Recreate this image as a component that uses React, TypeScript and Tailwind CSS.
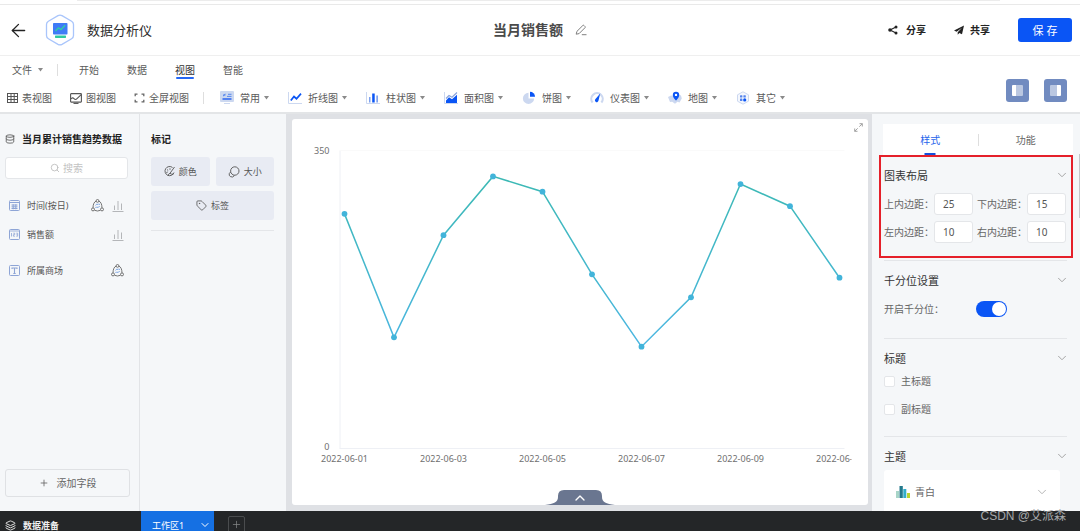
import { type ReactNode } from "react";
import { ArrowLeft, ChevronDown, ChevronUp, Database, Layers, Plus, Search, Tag } from "lucide-react";

const PRIMARY = "#0a55f5";
const SOFT = "#ccd8f0";

const points = [275, 130, 250, 319, 301, 204, 119, 177, 310, 284, 200];
const dates = ["2022-06-01", "2022-06-03", "2022-06-05", "2022-06-07", "2022-06-09", "2022-06-11"];

const menus = ["开始", "数据", "视图", "智能"];

function Caret() {
  return (
    <svg width="5" height="4" viewBox="0 0 5 4" className="shrink-0">
      <path d="M0 0h5L2.5 3.6z" fill="#8a8a8a" />
    </svg>
  );
}

function LogoIcon() {
  return (
    <svg width="30" height="32" viewBox="0 0 30 32">
      <path
        d="M13 1.6q2-1.1 4 0l9.6 5.6q1.9 1.1 1.9 3.3v11q0 2.2-1.9 3.3L17 30.4q-2 1.1-4 0L3.4 24.8q-1.900-1.100-1.900-3.300v-11q0-2.200 1.900-3.300z"
        fill="#fff"
        stroke="#a9c5fb"
        strokeWidth="1.3"
      />
      <rect x="8" y="9" width="14.500" height="11.500" rx="0.8" fill="#3f7cf6" />
      <path d="M10.500 17l3-3.200 2.400 1.800 4.200-4.400" fill="none" stroke="#2fd3a2" strokeWidth="1.300" />
      <rect x="10" y="21.500" width="11" height="2.400" rx="0.600" fill="#2fc9a0" />
    </svg>
  );
}

function EditIcon() {
  return (
    <svg width="12" height="12" viewBox="0 0 12 12" fill="none" stroke="#808080" strokeWidth="1">
      <path d="M1.200 10.200l.7-2.800L7.800 1.500q.6-.6 1.200 0l1 1q.6.600 0 1.200L4.100 9.600z" />
      <path d="M6.800 10.700h4.700" />
    </svg>
  );
}

function ShareIcon() {
  return (
    <svg width="10" height="10" viewBox="0 0 10 10">
      <path d="M8 2L2 5l6 3" fill="none" stroke="#222" strokeWidth="1.100" />
      <circle cx="8" cy="2" r="1.500" fill="#222" />
      <circle cx="2" cy="5" r="1.800" fill="#222" />
      <circle cx="8" cy="8" r="1.500" fill="#222" />
    </svg>
  );
}

function PlaneIcon() {
  return (
    <svg width="10" height="10" viewBox="0 0 10 10" fill="#222">
      <path d="M10 .5L0 5.500l2.600 1.200L8 2.800 3.700 7.300V9.800l1.600-1.700 2.700 1.200z" />
    </svg>
  );
}

function TableIcon() {
  return (
    <svg width="11" height="10" viewBox="0 0 11 10" fill="none" stroke="#555" strokeWidth="1">
      <rect x="0.500" y="0.500" width="10" height="9" />
      <path d="M.5 3.500h10M.5 6.500h10M4 .5v9M7.200.5v9" />
    </svg>
  );
}

function PictureIcon() {
  return (
    <svg width="12" height="11" viewBox="0 0 12 11" fill="none" stroke="#555" strokeWidth="1.100">
      <rect x="0.600" y="0.600" width="10.800" height="8.500" rx="0.600" />
      <path d="M.8 6q1.700-2 3.200-.4t3 .1l4.200-4" />
      <path d="M3.500 10.400h5" />
    </svg>
  );
}

function FullscreenIcon() {
  return (
    <svg width="11" height="10" viewBox="0 0 11 10" fill="none" stroke="#666" strokeWidth="1.300">
      <path d="M1.200 3.200V1.200h2.300M7.500 1.200h2.300v2M1.200 6.800v2h2.300M7.500 8.800h2.300v-2" />
    </svg>
  );
}

const chartTypes: { label: string; icon: ReactNode }[] = [
  {
    label: "常用",
    icon: (
      <>
        <rect width="14" height="11" rx="1" fill={SOFT} />
        <rect x="4" y="12" width="6" height="1" fill={SOFT} />
        <path d="M3 5q1.600-.4 2.200-2.200M3 4h2.500M8 3.300h3.500M7 5.400h4.500" fill="none" stroke="#4a80ee" strokeWidth="0.900" />
        <path d="M2.500 8h9" stroke="#1f5cf0" strokeWidth="1.400" />
      </>
    ),
  },
  {
    label: "折线图",
    icon: (
      <>
        <path d="M.5 1v11.500H14" fill="none" stroke={SOFT} />
        <path d="M2.800 9.500l3.200-4 2.500 2.200L13 2.600" fill="none" stroke={PRIMARY} strokeWidth="1.700" />
      </>
    ),
  },
  {
    label: "柱状图",
    icon: (
      <>
        <path d="M.5 1v11.500H14" fill="none" stroke={SOFT} />
        <rect x="3" y="6" width="1.500" height="5.500" fill="#7fa2ee" />
        <rect x="6.200" y="2.500" width="2.500" height="9" fill={PRIMARY} />
        <rect x="10.300" y="4.500" width="1.700" height="7" fill="#7fa2ee" />
      </>
    ),
  },
  {
    label: "面积图",
    icon: (
      <>
        <path d="M.5 1v11.500H14" fill="none" stroke={SOFT} />
        <path d="M2 7.500L5 4.500l3 1.700L13 1.500" fill="none" stroke="#8aa4dc" strokeWidth="1.200" />
        <path d="M2 12V9.500L5 6.300l3 2 5-4.500V12z" fill={PRIMARY} />
      </>
    ),
  },
  {
    label: "饼图",
    icon: (
      <>
        <path d="M6.500 1.800a5.600 5.600 0 1 0 5.600 5.600H6.500z" fill={SOFT} />
        <path d="M8 .8a5 5 0 0 1 5 5H8z" fill={PRIMARY} />
      </>
    ),
  },
  {
    label: "仪表图",
    icon: (
      <>
        <path d="M2.600 11.500A5.700 5.700 0 1 1 11.400 11.500" fill="none" stroke={SOFT} strokeWidth="2.200" />
        <path d="M10.200 2.600L8.500 9.600a1.800 1.800 0 1 1-3-1.600z" fill={PRIMARY} />
      </>
    ),
  },
  {
    label: "地图",
    icon: (
      <>
        <path d="M0 6l3-1.500L7 5l3-2 3 1.500.8 3-2.300 4-2-.8-2.500 2-2.800-2-2.200.3z" fill={SOFT} />
        <path d="M8 9.500S4.800 6.500 4.800 3.900a3.200 3.200 0 0 1 6.400 0C11.200 6.500 8 9.500 8 9.500z" fill={PRIMARY} />
        <circle cx="8" cy="3.900" r="1.200" fill="#fff" />
      </>
    ),
  },
  {
    label: "其它",
    icon: (
      <>
        <path d="M7 .8l5.500 3v6.400L7 13.200l-5.500-3V3.800z" fill="#f4f7fd" stroke={SOFT} />
        <g fill="#5584ec">
          <rect x="4" y="4.200" width="2.400" height="2.400" rx="0.500" />
          <rect x="7.400" y="4.200" width="2.400" height="2.400" rx="0.500" />
          <rect x="4" y="7.600" width="2.400" height="2.400" rx="0.500" />
          <circle cx="8.700" cy="8.900" r="1.600" fill={PRIMARY} />
        </g>
      </>
    ),
  },
];

function TopBar() {
  return (
    <header className="flex h-[51px] shrink-0 items-center border-b border-[#efefef] px-2">
      <div className="flex flex-1 items-center">
        <button aria-label="返回">
          <ArrowLeft size={21} strokeWidth={1.500} className="mr-4 text-[#222]" />
        </button>
        <LogoIcon />
        <span className="ml-3 text-[13px] text-[#2c2c2c]">数据分析仪</span>
      </div>
      <div className="flex items-center gap-3">
        <h1 className="text-[14px] font-bold text-[#4a4a4a]">当月销售额</h1>
        <button aria-label="编辑">
          <EditIcon />
        </button>
      </div>
      <div className="flex flex-1 items-center justify-end text-[10px] font-bold text-[#222]">
        <button className="mr-7 flex items-center gap-2">
          <ShareIcon />
          分享
        </button>
        <button className="mr-7 flex items-center gap-1.5">
          <PlaneIcon />
          共享
        </button>
        <button className="h-6 w-[54px] rounded-[3px] bg-[#0a55f5] text-[11px] font-normal text-white">保 存</button>
      </div>
    </header>
  );
}

function Toolbar() {
  return (
    <div className="flex h-14 shrink-0 items-center justify-between pr-[13px] text-[10px] text-[#5a5a5a]">
      <div className="flex-1">
        <nav className="flex h-7 items-center pl-3">
          <button className="flex items-center gap-1.5">
            文件 <Caret />
          </button>
          <span className="ml-3.5 mr-[21px] h-3 w-px bg-[#dedede]" />
          <div className="flex gap-7">
            {menus.map((m) => (
              <button key={m} className={m === "视图" ? "relative text-[#333]" : "relative"}>
                {m}
                {m === "视图" && <span className="absolute inset-x-px -bottom-1 h-0.5 rounded-full bg-[#2467f5]" />}
              </button>
            ))}
          </div>
        </nav>
        <div className="flex h-7 items-center pl-[7px]">
          <div className="flex items-center gap-[18px]">
            <button className="flex items-center gap-1">
              <TableIcon />
              表视图
            </button>
            <button className="flex items-center gap-1">
              <PictureIcon />
              图视图
            </button>
            <button className="flex items-center gap-1">
              <FullscreenIcon />
              全屏视图
            </button>
          </div>
          <span className="ml-[14px] mr-4 h-3 w-px bg-[#dedede]" />
          <div className="flex items-center gap-[19px]">
            {chartTypes.map((c) => (
              <button key={c.label} className="flex items-center gap-1">
                <svg width="14" height="14" viewBox="0 0 14 14" className="mr-0.5">
                  {c.icon}
                </svg>
                {c.label}
                <Caret />
              </button>
            ))}
          </div>
        </div>
      </div>
      <div className="flex gap-[15px] pt-3">
        <button aria-label="左侧面板" className="flex size-[23px] items-center justify-center rounded-[3px] bg-[#718bc0]">
          <span className="h-[11px] w-1 rounded-l-[1px] bg-white" />
          <span className="h-[11px] w-[7px] rounded-r-[1px] bg-[#bac7e1]" />
        </button>
        <button aria-label="右侧面板" className="flex size-[23px] items-center justify-center rounded-[3px] bg-[#718bc0]">
          <span className="h-[11px] w-[7px] rounded-l-[1px] bg-[#bac7e1]" />
          <span className="h-[11px] w-1 rounded-r-[1px] bg-white" />
        </button>
      </div>
    </div>
  );
}

function GroupIcon() {
  return (
    <svg width="13" height="13" viewBox="0 0 13 13" fill="none" stroke="#666" strokeWidth="0.900">
      <path d="M5 2.200Q2.200 3.300 2 8.800M8 2.200q2.800 1.100 3 6.600M3.600 11.300q2.900 1.400 5.800 0" />
      <circle cx="6.500" cy="1.900" r="1.400" />
      <circle cx="2" cy="10.400" r="1.500" />
      <circle cx="11" cy="10.400" r="1.500" />
      <path d="M4.500 6.300q1-1.600 2.900-.9M8.700 7q-1 1.900-3 1.300M8 4.600l.6 1.300M5.200 7.800l-.4 1.200" stroke="#6d9be0" />
    </svg>
  );
}

function BarsIcon() {
  return (
    <svg width="12" height="12" viewBox="0 0 12 12" fill="none" stroke="#b4b6b9" strokeWidth="1">
      <path d="M.5 11.500h11M2.500 5.500V10M6 1v9M9.500 3.500V10" />
    </svg>
  );
}

function FieldIcon({ type }: { type: string }) {
  return (
    <svg width="11" height="11" viewBox="0 0 11 11" fill="none" stroke="#8ea5d6" strokeWidth="1">
      <rect x="0.500" y="0.500" width="10" height="10" rx="1" />
      {type === "date" && <path d="M.5 2.500h10M2.500 5h6M2.500 6.800h6M2.500 8.500h6M4.200 4.300v5M6.800 4.300v5" />}
      {type === "number" && <path d="M2.500 4v3.500M4.300 4.200h1.400v1.500H4.400v1.500h1.500M7.300 4.200h1.400v3H7.300M7.500 5.700h1M.5 2h10" strokeWidth="0.800" />}
      {type === "text" && <path d="M3 4V3h5v1M5.500 3v5.500M4.300 8.500h2.400" strokeWidth="1.100" />}
    </svg>
  );
}

function Field({ type, name, group, bars }: { type: string; name: string; group?: boolean; bars?: boolean }) {
  return (
    <li className="flex h-[29px] items-center text-[9px] text-[#555]">
      <FieldIcon type={type} />
      <span className="ml-[7px] flex-1">{name}</span>
      <span className="flex items-center gap-2">
        {group && <GroupIcon />}
        {bars && <BarsIcon />}
      </span>
    </li>
  );
}

function FieldPanel() {
  return (
    <aside className="flex w-[140px] shrink-0 flex-col border-r border-[#e2e4e7] px-[5px] pb-3.5 pt-[17px]">
      <h2 className="flex h-4 items-center gap-[7px] text-[10px] font-bold text-[#222]">
        <Database size={10} strokeWidth={2} className="shrink-0 text-[#555]" />
        <span className="whitespace-nowrap">当月累计销售趋势数据</span>
      </h2>
      <label className="relative mt-[10px] flex h-[22px] w-[123px] items-center rounded-[3px] border border-[#e4e6e9] bg-white">
        <Search size={10} className="absolute left-11 text-[#bbb]" />
        <input
          placeholder="搜索"
          className="w-full bg-transparent pl-[57px] text-[10px] text-[#555] outline-none placeholder:text-[#c3c3c3]"
        />
      </label>
      <ul className="mt-3 flex-1 pl-1 pr-[10px]">
        <Field type="date" name="时间(按日)" group bars />
        <Field type="number" name="销售额" bars />
        <li className="h-[7px]" />
        <Field type="text" name="所属商场" group />
      </ul>
      <button className="flex h-7 w-[125px] items-center justify-center gap-2 rounded-[3px] border border-[#dfe1e4] text-[10px] text-[#666]">
        <Plus size={10} />
        添加字段
      </button>
    </aside>
  );
}

function MarkPanel() {
  return (
    <aside className="w-[146px] shrink-0 pl-[11px] pr-3 pt-[17px]">
      <h2 className="h-4 text-[10px] leading-4 font-bold text-[#222]">标记</h2>
      <div className="mt-[10px] grid grid-cols-2 gap-x-1.5 gap-y-[5px] border-b border-[#e4e6e9] pb-[10px] text-[9px] text-[#555]">
        <button className="flex h-[29px] items-center justify-center gap-1 rounded-[3px] bg-[#e8ebf3]">
          <svg width="11" height="11" viewBox="0 0 11 11" fill="none" stroke="#555" strokeWidth="0.900">
            <path d="M8.500 1.500A4.600 4.600 0 1 0 10 6.500M4 9.800q.3-2 2-2.500L10.500 1M3 3.500l1.200 1M2.300 6.500l1.500-.5M6 2.300v1.500M6 7.300q1.500 1.500 3.500.7" />
          </svg>
          颜色
        </button>
        <button className="flex h-[29px] items-center justify-center gap-1 rounded-[3px] bg-[#e8ebf3]">
          <svg width="12" height="12" viewBox="0 0 12 12" fill="none" stroke="#555" strokeWidth="0.900">
            <circle cx="6.800" cy="5" r="4.200" />
            <path d="M2.600 6q-2 1.500-1.300 3.300T4.500 11q1.500-.3 1.700-1.800" />
          </svg>
          大小
        </button>
        <button className="col-span-2 flex h-[29px] items-center justify-center gap-1 rounded-[3px] bg-[#e8ebf3]">
          <Tag size={11} strokeWidth={1.8} />
          标签
        </button>
      </div>
    </aside>
  );
}

function LineChart() {
  const x = (i: number) => 52 + i * 49.5;
  const y = (v: number) => 329 - (v / 350) * 298;
  return (
    <svg viewBox="0 0 575 386" className="h-full w-full">
      <defs>
        <linearGradient id="line" x1="0" y1="57" x2="0" y2="228" gradientUnits="userSpaceOnUse">
          <stop offset="0" stopColor="#3cb9b4" />
          <stop offset="1" stopColor="#4bb6e2" />
        </linearGradient>
        <clipPath id="plot">
          <rect width="559" height="386" />
        </clipPath>
      </defs>
      <path d="M47.500 31.500V329.500M47 329.500H552" stroke="#eef0f5" fill="none" />
      <path d="M47 31.500H552" stroke="#fafafa" />
      <polyline
        points={points.map((v, i) => `${x(i)},${y(v)}`).join(" ")}
        fill="none"
        stroke="url(#line)"
        strokeWidth="1.500"
      />
      {points.map((v, i) => (
        <circle key={i} cx={x(i)} cy={y(v)} r="2.900" fill="#42b4da" />
      ))}
      <g fill="#707070" fontSize="9" clipPath="url(#plot)">
        <text x="37" y="35" textAnchor="end">350</text>
        <text x="37" y="331" textAnchor="end">0</text>
        {dates.map((d, i) => (
          <text key={d} x={x(i * 2)} y="343" textAnchor="middle">{d}</text>
        ))}
      </g>
    </svg>
  );
}

function ChartArea() {
  return (
    <main className="flex min-w-0 flex-1 bg-[#dfe1e5] pb-1.5 pl-1.5 pr-1 pt-[5px]">
      <div className="relative min-w-0 flex-1 rounded-[3px] bg-white">
        <LineChart />
        <button aria-label="放大" className="absolute right-[5px] top-1">
          <svg width="9" height="9" viewBox="0 0 9 9" fill="none" stroke="#999" strokeWidth="0.900">
            <path d="M5.500.7h2.800v2.800M8.300.7L5.300 3.700M3.500 8.300H.7V5.500M.7 8.300l3-3" />
          </svg>
        </button>
        <button aria-label="展开" className="absolute bottom-0 left-1/2 -translate-x-1/2 text-white">
          <svg width="70" height="15" viewBox="0 0 70 15">
            <path d="M0 15c9-1 13-3 13-8V6q0-6 6-6h32q6 0 6 6v1c0 5 4 7 13 8z" fill="#6a7690" />
          </svg>
          <ChevronUp size={16} className="absolute left-[27px] top-0" />
        </button>
      </div>
    </main>
  );
}

function SectionTitle({ id, children }: { id?: string; children: ReactNode }) {
  return (
    <h3 className="flex h-4 items-center justify-between text-[11px] text-[#333]">
      <span id={id}>{children}</span>
      <ChevronDown size={14} strokeWidth={1.5} className="-mr-0.5 text-[#999]" />
    </h3>
  );
}

function PaddingInput({ label, value }: { label: string; value: string }) {
  return (
    <label className="flex items-center">
      <span className="w-[50px] whitespace-nowrap">{label}：</span>
      <input
        defaultValue={value}
        className="h-[22px] w-[39px] rounded-[3px] border border-[#e4e6e9] bg-white pl-2 text-[10px] text-[#555] outline-none"
      />
    </label>
  );
}

function CheckRow({ label }: { label: string }) {
  return (
    <label className="flex h-4 items-center gap-1.5">
      <input type="checkbox" className="size-[11px] appearance-none rounded-[2px] border border-[#e4e6e9] bg-white" />
      {label}
    </label>
  );
}

function StylePanel() {
  return (
    <aside className="relative w-[208px] shrink-0 overflow-hidden pl-[7px] pr-[7px] pt-[10px] text-[10px] text-[#666]">
      <span className="absolute right-0 top-10 h-16 w-px bg-[#c4c6c9]" />
      <div className="ml-1 flex h-[31px] items-center bg-white">
        <button className="relative h-full flex-1 text-[#2563eb]">
          样式
          <span className="absolute bottom-0 left-1/2 h-0.5 w-[11px] -translate-x-1/2 bg-[#1450dc]" />
        </button>
        <span className="h-3 w-px bg-[#dedede]" />
        <button className="h-full flex-1">功能</button>
      </div>

      <section className="h-[103px] border-2 border-[#e5202a] pl-[3px] pr-1 pt-[10px]">
        <SectionTitle>图表布局</SectionTitle>
        <div className="mt-[10px] grid grid-cols-[93px_89px] gap-y-[6px]">
          <PaddingInput label="上内边距" value="25" />
          <PaddingInput label="下内边距" value="15" />
          <PaddingInput label="左内边距" value="10" />
          <PaddingInput label="右内边距" value="10" />
        </div>
      </section>

      <div className="pl-[5px] pr-1.5">
        <section className="mt-0.5 border-t border-[#e4e6e9] pb-[21px] pt-[11px]">
          <SectionTitle>千分位设置</SectionTitle>
          <label className="mt-3 flex h-[17px] items-center">
            <span className="w-[92px]">开启千分位：</span>
            <input
              type="checkbox"
              role="switch"
              defaultChecked
              className="relative h-4 w-[31px] appearance-none rounded-full bg-[#0a55f5] before:absolute before:right-px before:top-px before:size-3.5 before:rounded-full before:bg-white"
            />
          </label>
        </section>
        <section className="border-t border-[#e4e6e9] pb-[19px] pt-[11px]">
          <SectionTitle>标题</SectionTitle>
          <div className="mt-[7px] flex flex-col gap-3">
            <CheckRow label="主标题" />
            <CheckRow label="副标题" />
          </div>
        </section>
        <section className="border-t border-[#e4e6e9] pt-[11px]">
          <SectionTitle id="theme">主题</SectionTitle>
          <div className="relative mr-[7px] mt-1.5 flex h-11 items-center rounded-[3px] bg-white">
            <svg width="14" height="12" viewBox="0 0 14 12" className="absolute left-3">
              <rect x="0" y="5" width="3" height="7" fill="#a8d5c8" />
              <rect x="3.500" y="0" width="3.300" height="12" fill="#23798c" />
              <rect x="7.300" y="3" width="3" height="9" fill="#33aecb" />
              <rect x="11" y="7" width="3" height="5" fill="#b9d531" />
            </svg>
            <select
              aria-labelledby="theme"
              className="h-full w-full appearance-none bg-transparent pl-[31px] text-[10px] text-[#666] outline-none"
            >
              <option>青白</option>
            </select>
            <ChevronDown size={14} strokeWidth={1.5} className="pointer-events-none absolute right-[11px] text-[#aaa]" />
          </div>
        </section>
      </div>
    </aside>
  );
}

function BottomBar() {
  return (
    <footer className="relative h-5 shrink-0 bg-[#242628] text-[9px] text-[#eee]">
      <div className="flex h-full items-start overflow-hidden">
        <button className="flex h-7 w-[141px] items-center gap-[7px] pl-[5px] font-bold">
          <Layers size={11} strokeWidth={2} />
          数据准备
        </button>
        <button className="flex h-7 w-[73px] items-center justify-between bg-[#1570e3] pl-[11px] pr-[3px] text-white">
          工作区1
          <ChevronDown size={12} />
        </button>
        <button
          aria-label="新增工作区"
          className="ml-3.5 mt-[5px] flex size-[17px] shrink-0 items-center justify-center rounded-[2px] border border-[#4a4c4e] text-[#8a8c8e]"
        >
          <Plus size={11} strokeWidth={1.5} />
        </button>
      </div>
      <span className="absolute -top-1 right-3.5 font-['Liberation_Sans','Noto_Sans_CJK_SC',sans-serif] text-[12px] leading-[18px] text-[#a6a8aa]">
        CSDN @艾派森
      </span>
    </footer>
  );
}

export default function App() {
  return (
    <div className="flex h-screen flex-col overflow-hidden bg-white font-['Noto_Sans','Noto_Sans_CJK_SC',sans-serif] leading-none">
      <div className="h-[5px] shrink-0 border-b border-[#e9e9e9]">
        <div className="ml-[77px] mr-20 h-px bg-[#ececec]" />
      </div>
      <TopBar />
      <Toolbar />
      <div className="flex min-h-0 flex-1 border-t-2 border-[#e3e5e7] bg-[#f5f7f9]">
        <FieldPanel />
        <MarkPanel />
        <ChartArea />
        <StylePanel />
      </div>
      <BottomBar />
    </div>
  );
}
